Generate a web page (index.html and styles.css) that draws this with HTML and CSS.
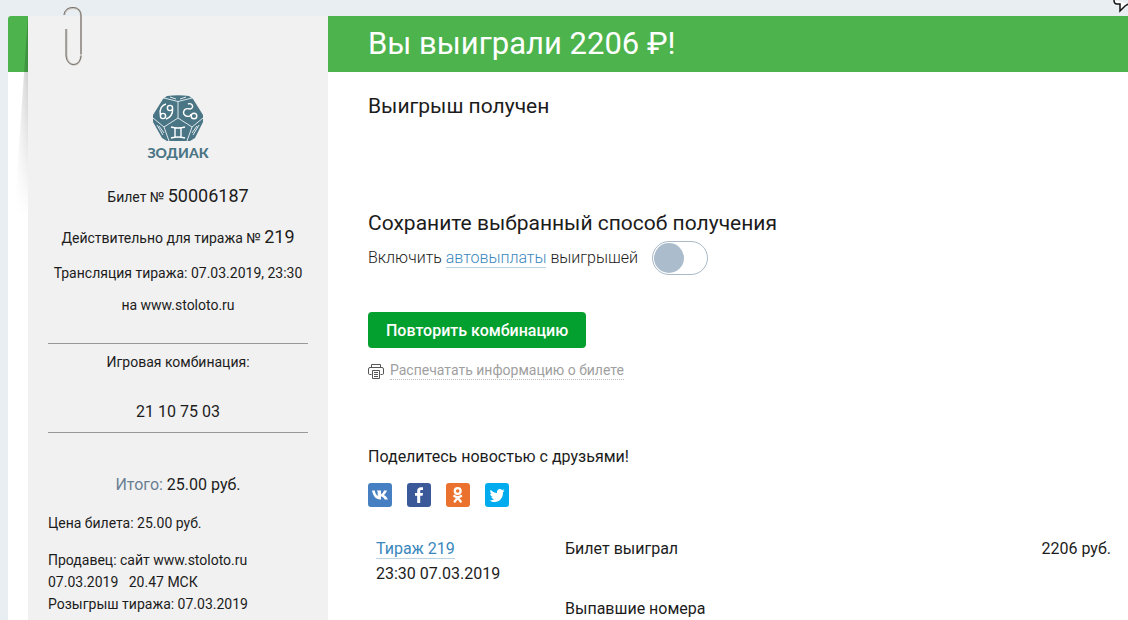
FILE: index.html
```
<!DOCTYPE html>
<html lang="ru">
<head>
    <meta charset="UTF-8">
    <meta name="viewport" content="width=device-width, initial-scale=1.0">
    <title>Билет № 50006187</title>
    <link rel="stylesheet" href="styles.css">
</head>
<body>
    <svg class="chat-icon" viewBox="0 0 16 14" aria-hidden="true">
        <path d="M2 0 Q2 4 5 4 H8 V11 L13 6 L16 4" fill="#fff" stroke="#111" stroke-width="1.500"/>
    </svg>

    <div class="card">
        <header class="banner">
            <h1>Вы выиграли 2206 ₽!</h1>
        </header>

        <!-- Ticket -->
        <aside class="ticket">
            <svg class="clip" viewBox="0 0 22 62" aria-hidden="true">
                <path d="M1.500 9 C2 4 5 2 10 2 C15 2 18 5 18 10 V49 C18 62 4 62 3.500 49 V23" fill="none" stroke="#c9c5c0" stroke-width="2"/>
                <path d="M1 9 C1.500 4 5 1.500 10 1.500 C15 1.500 18 5 18 10 V48" fill="none" stroke="#77716c" stroke-width="1"/>
                <path d="M3 23 V49 C3 61 17 62 18 50" fill="none" stroke="#77716c" stroke-width="1"/>
            </svg>
            <div class="logo">
                <svg viewBox="0 0 52 46" aria-hidden="true">
                    <path d="M15 1 Q26 -0.500 37 1 L41 4 L51 20 V27 L43 43 L38 46 H15 L10 43 L1 27 V20 L11 4 Z" fill="#4a7585"/>
                    <g fill="none" stroke="#dfe9ec" stroke-width="1">
                        <path d="M12 3 L26 6.500 L40 3 M26 6.500 V23 M26 23 L12 32 M26 23 L40 32 M12 32 L1 23 M40 32 L51 23 M12 32 L17 46 M40 32 L35 46"/>
                        <path d="M18 2 L24 4 M34 2 L28 4 M5 30 L11 40 M7 31 L12 38 M47 30 L41 40 M45 31 L40 38"/>
                    </g>
                    <g fill="none" stroke="#fff" stroke-width="1.400">
                        <circle cx="11" cy="21" r="2.600"/>
                        <path d="M8.400 20 C7 14 10 10 14 9"/>
                        <circle cx="18" cy="13" r="2.600"/>
                        <path d="M20.600 14 C21 19 18 23 14 24"/>
                        <path d="M36 9 C40 7 43 13 38 14 C31 12 30 19 34 21 C37 22 39 21 39 19"/>
                        <circle cx="42" cy="21" r="2.800"/>
                        <path d="M19 32 Q26 34 33 32 M19 43 Q26 41 33 43 M23 33 V42 M29 33 V42"/>
                    </g>
                </svg>
                <span>ЗОДИАК</span>
            </div>
            <p class="ticket-number">Билет № <b>50006187</b></p>
            <p class="ticket-draw">Действительно для тиража № <b>219</b></p>
            <p class="ticket-air">Трансляция тиража: 07.03.2019, 23:30<br>на www.stoloto.ru</p>
            <div class="combination">
                <p>Игровая комбинация:</p>
                <p class="numbers">21 10 75 03</p>
            </div>
            <p class="total"><span>Итого:</span> 25.00 руб.</p>
            <p class="price">Цена билета: 25.00 руб.</p>
            <p class="seller">Продавец: сайт www.stoloto.ru<br>07.03.2019 &nbsp; 20.47 МСК<br>Розыгрыш тиража: 07.03.2019</p>
        </aside>

        <main class="content">
            <h2 class="status">Выигрыш получен</h2>

            <section class="payout">
                <h2>Сохраните выбранный способ получения</h2>
                <div class="autopay">
                    <label for="autopay">Включить <a href="#">автовыплаты</a> выигрышей</label>
                    <input type="checkbox" id="autopay" class="switch">
                </div>
            </section>

            <button type="button" class="repeat">Повторить комбинацию</button>
            <div class="print">
                <svg viewBox="0 0 16 16" fill="none" stroke="#555" aria-hidden="true">
                    <path d="M3.500 4 V1.500 H12.500 V4 M3.500 11.500 H1.500 Q0.500 11.500 0.500 10 V6 Q0.500 4.500 2 4.500 H14 Q15.500 4.500 15.500 6 V10 Q15.500 11.500 14.500 11.500 H12.500 M4.500 7.500 H11.500 V15.500 H4.500 Z M6 9.500 H10 M6 11.500 H10 M6 13.500 H10"/>
                </svg>
                <a href="#">Распечатать информацию о билете</a>
            </div>

            <section class="share">
                <p>Поделитесь новостью с друзьями!</p>
                <div class="socials">
                    <a href="#" class="vk" aria-label="ВКонтакте">
                        <svg viewBox="0 0 24 24"><path fill="#fff" d="M12.300 16.500 C7.500 16.500 5 12.500 4 7.500 H6.800 C7.200 10.300 8.400 12.300 9.700 13.100 V9.600 Q9.700 8.500 8.700 7.500 H13 V11.300 C14.200 11 15.300 9.300 16 7.500 H19 C18.500 9.400 17.200 11 16 11.900 C17.500 12.700 19 14.300 19.900 16.500 H16.700 C16 15 14.600 13.600 13 13.300 V16.500 Z"/></svg>
                    </a>
                    <a href="#" class="fb" aria-label="Facebook">
                        <svg viewBox="0 0 24 24"><path fill="#fff" d="M10.200 20 V12.800 H8 V10 H10.200 V8 C10.200 5.400 11.700 4.200 14 4.200 L16 4.300 V6.900 H14.600 C13.500 6.900 13.200 7.400 13.200 8.300 V10 H16 L15.600 12.800 H13.200 V20 Z"/></svg>
                    </a>
                    <a href="#" class="ok" aria-label="Одноклассники">
                        <svg viewBox="0 0 24 24" fill="none" stroke="#fff" stroke-width="2.300" stroke-linecap="round"><circle cx="11.700" cy="8" r="2.900"/><path d="M8.300 13 Q11.700 15.200 15.100 13 M11.700 14.600 L8.700 18.500 M11.700 14.600 L14.700 18.500"/></svg>
                    </a>
                    <a href="#" class="tw" aria-label="Twitter">
                        <svg viewBox="0 0 24 24"><path fill="#fff" d="M19.500 7.500 C18.900 7.800 18.400 7.900 17.700 8 C18.400 7.600 18.900 7 19.100 6.300 C18.500 6.600 17.800 6.900 17.100 7 C15.100 5 11.500 6.400 12 9.900 C9.500 9.800 7.200 8.600 5.700 6.700 C4.800 8.300 5.300 10.100 6.700 11.100 C6.200 11.100 5.700 10.900 5.200 10.700 C5.200 12.300 6.300 13.600 7.800 13.900 C7.300 14 6.900 14 6.400 13.900 C6.800 15.200 8 16 9.300 16.100 C8 17.200 6.300 17.600 4.700 17.400 C11.500 21.600 18.300 16.700 18 9.200 C18.600 8.700 19.100 8.200 19.500 7.500 Z"/></svg>
                    </a>
                </div>
            </section>

            <table class="results">
                <tr>
                    <td class="draw"><a href="#">Тираж 219</a><br>23:30 07.03.2019</td>
                    <td>Билет выиграл</td>
                    <td class="sum">2206 руб.</td>
                </tr>
                <tr>
                    <td></td>
                    <td>Выпавшие номера</td>
                    <td></td>
                </tr>
            </table>
        </main>
    </div>
</body>
</html>
```
FILE: styles.css
```
* {
    box-sizing: border-box;
}
body {
    font-family: Roboto, "Liberation Sans", sans-serif;
    font-size: 16px;
    line-height: 24px;
    color: #1c1c1c;
    margin: 0;
    padding: 16px 0 0 8px;
    background-color: #e9eef2;
}
h1, h2, p {
    margin: 0;
    font-weight: 400;
}
a {
    color: #3a87bd;
    text-decoration: none;
    border-bottom: 1px solid #bcd3e3;
}
.chat-icon {
    position: absolute;
    top: 0;
    right: 0;
    width: 16px;
    height: 14px;
}
.card {
    display: grid;
    grid-template-columns: 20px 300px 1fr;
    grid-template-rows: 56px auto;
    min-height: calc(100vh - 16px);
    background-color: #fff;
    border-top-left-radius: 3px;
}
.banner {
    grid-column: 1 / -1;
    grid-row: 1;
    padding-left: 360px;
    background-color: #4db34d;
    border-top-left-radius: 3px;
    color: #fff;
}
.banner h1 {
    font-size: 31px;
    line-height: 56px;
}

/* Ticket */
.ticket {
    grid-column: 2;
    grid-row: 1 / span 2;
    position: relative;
    padding: 79px 20px 0;
    background-color: #f1f1f1;
    font-size: 14px;
    line-height: 22px;
    text-align: center;
}
.ticket::before {
    content: "";
    position: absolute;
    top: 0;
    left: -14px;
    width: 14px;
    height: 200px;
    background: linear-gradient(to right, transparent, rgba(0, 0, 0, 0.2));
    clip-path: polygon(100% 0, 100% 100%, 0 100%);
    mask-image: linear-gradient(#000 20%, transparent);
}
.ticket b {
    font-size: 18px;
    font-weight: 400;
}
.clip {
    position: absolute;
    top: -10px;
    left: 35px;
    width: 22px;
    height: 62px;
}
.logo svg {
    display: block;
    width: 52px;
    height: 46px;
    margin: 0 auto;
}
.logo span {
    display: block;
    font-family: Lato, sans-serif;
    font-size: 14px;
    font-weight: 900;
    line-height: 24px;
    color: #4a7585;
}
.ticket-number {
    margin-top: 20px;
}
.ticket-draw {
    margin-top: 18px;
}
.ticket-air {
    margin-top: 8px;
    line-height: 32px;
    white-space: nowrap;
}
.combination {
    margin-top: 22px;
    padding-top: 7px;
    border-top: 1px solid #999;
    border-bottom: 1px solid #999;
}
.numbers {
    margin-top: 28px;
    padding-bottom: 9px;
    font-size: 16px;
}
.total {
    margin-top: 40px;
    font-size: 16px;
    line-height: 24px;
}
.total span {
    color: #6b7f93;
}
.price, .seller {
    margin-top: 15px;
    text-align: left;
}

/* Right part */
.content {
    grid-column: 3;
    grid-row: 2;
    padding: 20px 0 0 40px;
}
.content h2 {
    font-size: 21px;
    line-height: 28px;
}
.payout {
    margin-top: 89px;
}
.autopay {
    display: flex;
    align-items: center;
    gap: 14px;
    margin-top: 4px;
    font-weight: 300;
}
.switch {
    appearance: none;
    width: 56px;
    height: 34px;
    margin: 0;
    padding: 1px;
    border: 1px solid #a9b9c8;
    border-radius: 17px;
}
.switch::before {
    content: "";
    display: block;
    width: 30px;
    height: 30px;
    border-radius: 50%;
    background-color: #abbdcc;
}
.switch:checked::before {
    margin-left: auto;
}
.repeat {
    display: block;
    height: 36px;
    margin-top: 37px;
    padding: 0 18px;
    border: 0;
    border-radius: 4px;
    background-color: #04a02f;
    color: #fff;
    font: 500 16px Roboto, sans-serif;
}
.print {
    display: flex;
    align-items: center;
    gap: 6px;
    margin-top: 13px;
    font-size: 14px;
    line-height: 18px;
}
.print svg {
    width: 16px;
    height: 16px;
}
.print a {
    color: #a0a0a0;
    border-bottom: 1px dotted #bbb;
}
.share {
    margin-top: 65px;
}
.socials {
    display: flex;
    gap: 15px;
    margin-top: 14px;
}
.socials a {
    width: 24px;
    height: 24px;
    border: 0;
    border-radius: 3px;
}
.socials svg {
    display: block;
}
.vk {
    background-color: #4680c2;
}
.fb {
    background-color: #3b5998;
}
.ok {
    background-color: #eb722e;
}
.tw {
    background-color: #00aced;
}
.results {
    width: 100%;
    margin-top: 29px;
    border-collapse: collapse;
}
.results td {
    padding: 0 0 10px;
    line-height: 25px;
    vertical-align: top;
}
.results .draw {
    width: 197px;
    padding: 0 0 10px 8px;
}
.results .sum {
    padding-right: 17px;
    text-align: right;
}
```
